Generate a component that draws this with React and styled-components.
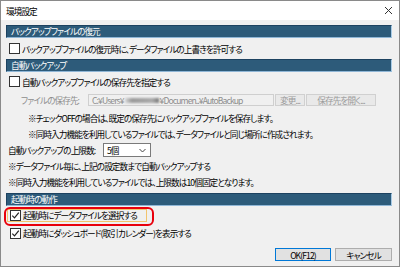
import React from 'react';
import styled, { createGlobalStyle } from 'styled-components';

const GlobalStyle = createGlobalStyle`
  html, body { margin: 0; padding: 0; background: #fff; }
  body { font-family: "Noto Sans CJK JP", "Liberation Sans", sans-serif; }
`;

const Window = styled.div`
  width: 400px;
  height: 267px;
  box-sizing: border-box;
  border: 1px solid #8a8a8a;
  background: #f0f0f0;
  display: flex;
  flex-direction: column;
  font-size: 8.6px;
  color: #000;
  font-feature-settings: "palt";
  letter-spacing: -0.9px;
`;

const TitleBar = styled.div`
  height: 19px;
  background: #fff;
  display: flex;
  align-items: center;
  justify-content: space-between;
  padding: 0 6px 0 5px;
`;

const Body = styled.div`
  flex: 1;
  display: flex;
  flex-direction: column;
  padding: 5px 7px 0 5px;
`;

const SectionHeader = styled.div`
  height: 13px;
  box-sizing: border-box;
  background: #2d5b7a;
  border: 1px solid #1d4260;
  border-right-color: #a8cbe6;
  border-bottom-color: #8fb6d6;
  color: #fff;
  padding-left: 4px;
  line-height: 11px;
  margin-top: ${p => p.$mt || 0}px;
`;

const Row = styled.div`
  position: relative;
  height: ${p => p.$h || 16}px;
  display: flex;
  align-items: center;
  padding-left: ${p => p.$pl || 0}px;
  margin-top: ${p => p.$mt || 0}px;
  color: ${p => (p.$muted ? '#8d8d8d' : '#000')};
  white-space: nowrap;
`;

const Box = styled.span`
  width: 11px;
  height: 11px;
  box-sizing: border-box;
  border: 1px solid #333;
  background: #fff;
  display: inline-flex;
  align-items: center;
  justify-content: center;
  margin-right: 2px;
  flex: none;
`;

const Label = styled.span`
  width: ${p => p.$w}px;
  flex: none;
`;

const PathField = styled.div`
  width: 186px;
  height: 12px;
  box-sizing: border-box;
  border: 1px solid #cfcfcf;
  background: #f0f0f0;
  color: #8d8d8d;
  display: flex;
  align-items: center;
  padding-left: 3px;
  overflow: hidden;
`;

const Blur = styled.span`
  display: inline-block;
  width: 34px;
  height: 5px;
  margin: 0 1px;
  background: linear-gradient(90deg, #d8d8d8, #9a9a9a 20%, #aaa 80%, #777);
  filter: blur(0.8px);
`;

const SmallButton = styled.div`
  width: ${p => p.$w}px;
  height: 12px;
  box-sizing: border-box;
  border: 1px solid #d0d0d0;
  background: #e9e9e9;
  color: #9a9a9a;
  display: flex;
  align-items: center;
  justify-content: center;
  margin-left: 1px;
`;

const Select = styled.div`
  width: 48px;
  height: 14px;
  box-sizing: border-box;
  border: 1px solid #7a7a7a;
  background: #fff;
  display: flex;
  align-items: center;
  justify-content: space-between;
  padding: 0 4px 0 3px;
`;

const Focus = styled.div`
  display: flex;
  align-items: center;
  height: 13px;
  box-sizing: border-box;
  width: 140px;
  border: 1px solid #f2c46e;
  padding-left: 2px;
  margin-left: -3px;
`;

const RedRing = styled.div`
  position: absolute;
  left: -2px;
  top: 1px;
  width: 150px;
  height: 19px;
  box-sizing: border-box;
  border: 2.5px solid #e8000c;
  border-radius: 6px;
  pointer-events: none;
`;

const Footer = styled.div`
  display: flex;
  justify-content: flex-end;
  gap: 4px;
  margin-top: 6px;
`;

const DialogButton = styled.div`
  width: ${p => p.$w}px;
  height: 13px;
  box-sizing: border-box;
  border: 1px solid ${p => (p.$primary ? '#0078d7' : '#adadad')};
  background: #e1e1e1;
  display: flex;
  align-items: center;
  justify-content: center;
`;

const Check = () => (
  <svg width="9" height="9" viewBox="0 0 9 9">
    <path d="M1.3 4.6 L3.5 6.9 L7.8 1.6" fill="none" stroke="#222" strokeWidth="1.2" />
  </svg>
);

const CheckBox = ({ checked }) => <Box>{checked && <Check />}</Box>;

export default function App() {
  return (
    <>
      <GlobalStyle />
      <Window>
        <TitleBar>
          <span>環境設定</span>
          <svg width="9" height="9" viewBox="0 0 9 9">
            <path d="M1 1 L8 8 M8 1 L1 8" stroke="#333" strokeWidth="1" />
          </svg>
        </TitleBar>
        <Body>
          <SectionHeader>バックアップファイルの復元</SectionHeader>
          <Row $h={21} $pl={3}>
            <CheckBox />
            バックアップファイルの復元時に、データファイルの上書きを許可する
          </Row>

          <SectionHeader>自動バックアップ</SectionHeader>
          <Row $h={19} $pl={3}>
            <CheckBox />
            自動バックアップファイルの保存先を指定する
          </Row>
          <Row $h={18} $pl={15} $muted>
            <Label $w={67}>ファイルの保存先:</Label>
            <PathField>
              C:¥Users¥<Blur />¥Documen..¥AutoBackup
            </PathField>
            <SmallButton $w={30}>変更...</SmallButton>
            <SmallButton $w={70}>保存先を開く...</SmallButton>
          </Row>
          <Row $pl={22} $mt={1}>※チェックOFFの場合は、既定の保存先にバックアップファイルを保存します。</Row>
          <Row $pl={22}>※同時入力機能を利用しているファイルでは、データファイルと同じ場所に作成されます。</Row>
          <Row $pl={2}>
            <Label $w={95}>自動バックアップの上限数:</Label>
            <Select>
              <span>5個</span>
              <svg width="7" height="5" viewBox="0 0 7 5">
                <path d="M0.5 1 L3.5 4 L6.5 1" fill="none" stroke="#444" strokeWidth="1" />
              </svg>
            </Select>
          </Row>
          <Row $pl={2}>※データファイル毎に、上記の設定数まで自動バックアップする</Row>
          <Row $pl={2}>※同時入力機能を利用しているファイルでは、上限数は10個固定となります。</Row>

          <SectionHeader $mt={3}>起動時の動作</SectionHeader>
          <Row $h={18} $pl={4}>
            <Focus>
              <CheckBox checked />
              起動時にデータファイルを選択する
            </Focus>
            <RedRing />
          </Row>
          <Row $h={18} $pl={4}>
            <CheckBox checked />
            起動時にダッシュボード(取引カレンダー)を表示する
          </Row>

          <Footer>
            <DialogButton $w={56} $primary>OK(F12)</DialogButton>
            <DialogButton $w={57}>キャンセル</DialogButton>
          </Footer>
        </Body>
      </Window>
    </>
  );
}
